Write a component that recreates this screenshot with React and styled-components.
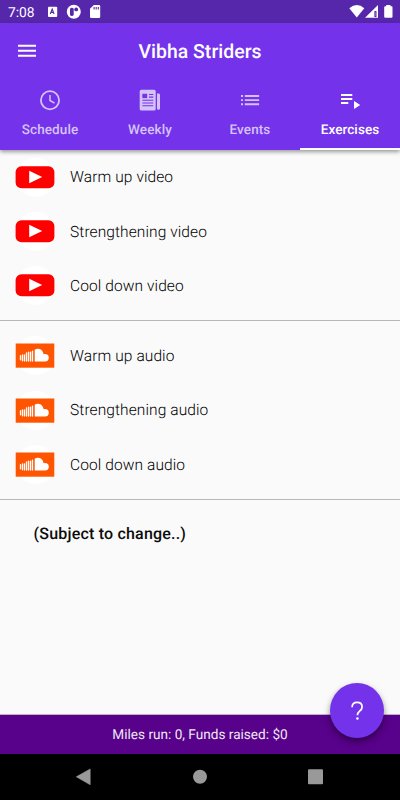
import React from "react";
import styled, { createGlobalStyle } from "styled-components";

const GlobalStyle = createGlobalStyle`
  * { box-sizing: border-box; }
  body {
    margin: 0;
    font-family: Roboto, "Liberation Sans", sans-serif;
    text-rendering: geometricPrecision;
  }
  svg { display: block; }
`;

const Screen = styled.div`
  width: 400px;
  height: 800px;
  display: flex;
  flex-direction: column;
  overflow: hidden;
  background: #fafafa;
`;

const StatusBar = styled.header`
  flex: 0 0 23px;
  min-height: 0;
  height: 23px;
  display: flex;
  justify-content: space-between;
  background: #5627ab;
  color: #fff;
`;

const Clock = styled.span`
  padding: 3px 0 0 8px;
  width: 47px;
  font-size: 13.8px;
  font-weight: 400;
  letter-spacing: 0;
  line-height: 20px;
`;

const StatusGroup = styled.div`
  display: flex;
`;

const Header = styled.div`
  flex: 0 0 127px;
  background: #7433ea;
  box-shadow: 0 2px 4px rgba(0, 0, 0, 0.38);
  z-index: 1;
`;

const Toolbar = styled.div`
  height: 56px;
  display: grid;
  grid-template-columns: 56px 1fr 56px;
  align-items: center;
`;

const MenuButton = styled.button`
  border: 0;
  background: none;
  padding: 0 0 0 18px;
  height: 56px;
`;

const Title = styled.h1`
  margin: 0;
  padding-top: 2px;
  color: #fff;
  text-align: center;
  font-size: 19.4px;
  line-height: 24px;
  font-weight: 500;
  letter-spacing: 0.05px;
`;

const Tabs = styled.nav`
  display: grid;
  grid-template-columns: repeat(4, 1fr);
  height: 71px;
`;

const Tab = styled.button`
  display: flex;
  flex-direction: column;
  align-items: center;
  padding: 9px 0 0;
  border: 0;
  border-bottom: 2px solid ${(p) => (p.$active ? "#fff" : "transparent")};
  background: none;
  font-family: inherit;
  font-size: 13.5px;
  font-weight: 500;
  line-height: 16px;
  letter-spacing: 0.1px;
  text-rendering: inherit;
  color: ${(p) => (p.$active ? "#fff" : "#d5c2f9")};
`;

const TabIcon = styled.span`
  height: 34px;
`;

const Content = styled.main`
  flex: 1;
`;

const Row = styled.div`
  height: 54.4px;
  display: flex;
  align-items: center;
  padding-left: 16px;
  gap: 15px;
`;

const Avatar = styled.span`
  width: 39px;
  height: 39px;
  border-radius: 50%;
  background: #fff;
`;

const RowLabel = styled.span`
  color: #000;
  font-size: 15.5px;
  line-height: 22px;
  font-weight: 350;
  letter-spacing: 0.1px;
`;

const Divider = styled.hr`
  margin: 7.3px 0;
  border: 0;
  height: 1px;
  background: #b7b7b7;
`;

const Note = styled.p`
  margin: 22.5px 0 0 33.5px;
  color: #0c0c0c;
  font-size: 16px;
  line-height: 22px;
  font-weight: 500;
  letter-spacing: 0.2px;
`;

const Footer = styled.footer`
  position: relative;
  flex: 0 0 39px;
  display: flex;
  align-items: center;
  justify-content: center;
  background: #58018a;
  color: #f0e8f5;
  font-size: 13.6px;
  box-shadow: 0 -1px 0 #b9b3c2;
`;

const HelpButton = styled.button`
  position: absolute;
  right: 16px;
  top: -32px;
  width: 54px;
  height: 55px;
  border: 0;
  border-radius: 50%;
  background: #7433ea;
  display: grid;
  place-items: center;
  padding: 0;
  box-shadow: 0 3px 5px rgba(0, 0, 0, 0.3), 0 4px 9px rgba(0, 0, 0, 0.18);
`;

const SystemNav = styled.nav`
  flex: 0 0 46px;
  background: #000;
`;

const NotificationIcons = () => (
  <svg width="58" height="23" viewBox="47 0 58 23" fill="#fff">
    <rect x="48" y="6.7" width="9.2" height="10.3" rx="1" />
    <path d="M50.3 14 52.2 9l1.9 5M51 12.4h2.5" fill="none" stroke="#5627ab" strokeWidth="1.1" />
    <circle cx="73.8" cy="11.8" r="7" />
    <rect x="70" y="7.7" width="3.7" height="8.2" rx="1.6" fill="#5627ab" />
    <circle cx="76.2" cy="9.4" r="1.9" fill="#5627ab" />
    <path d="M93.8 5H99q1.2 0 1.2 1.2v10.6q0 1.2-1.2 1.2h-7.8q-1.2 0-1.2-1.2V8.8z" />
    <path d="M94.1 7v2.5M96.2 7v2.5M98.3 7v2.5" stroke="#5627ab" strokeWidth="1.1" />
  </svg>
);

const SystemIcons = () => (
  <svg width="52" height="23" viewBox="348 0 52 23" fill="#fff">
    <path d="M349.3 8.2q7.7-6.3 15 0L356.8 17.6z" />
    <path d="M365 17.7 378 5v12.7z" />
    <path d="M374.4 11h2.1v6h-2.1z" fill="#5627ab" />
    <path d="M374.7 12h1v4h-1z" fill="#8f70c8" />
    <path d="M386.2 5h4.3v1.3h1q1 0 1 1v9.5q0 1-1 1h-6.3q-1 0-1-1V7.3q0-1 1-1h1z" />
  </svg>
);

const MenuIcon = () => (
  <svg width="18" height="14" viewBox="0 0 18 14" stroke="#fff" strokeWidth="2">
    <path d="M0 1.7h18M0 6.7h18M0 11.7h18" />
  </svg>
);

const ClockIcon = () => (
  <svg width="24" height="24" viewBox="0 0 24 24" fill="none" stroke="currentColor" strokeWidth="1.8">
    <circle cx="12" cy="12.2" r="9.1" />
    <path d="M12 7v5.5l4.5 2.7" strokeWidth="1.5" />
  </svg>
);

const NewsIcon = () => (
  <svg width="24" height="24" viewBox="0 0 24 24">
    <rect x="1.7" y="1.8" width="16" height="20.7" rx="1.6" fill="currentColor" />
    <path d="M19 5.5h1.6q1.4 0 1.4 1.4v13.3q0 1.6-1.5 1.6T19 20.2z" fill="currentColor" />
    <g fill="none" stroke="#7433ea" strokeWidth="1.1">
      <path d="M4.4 12.3h10.9M4.4 15h10.9M4.4 17.8h10.9M11 6.5h4.3M11 9.1h4.3" />
      <rect x="4.9" y="6.3" width="3.7" height="3.3" fill="#7433ea" />
    </g>
  </svg>
);

const ListIcon = () => (
  <svg width="24" height="24" viewBox="0 0 24 24" stroke="currentColor" strokeWidth="1.9">
    <path d="M3 8h2M3 12.1h2M3 16.2h2M6.8 8H21.1M6.8 12.1H21.1M6.8 16.2H21.1" />
  </svg>
);

const PlaylistIcon = () => (
  <svg width="24" height="24" viewBox="0 0 24 24" stroke="currentColor" strokeWidth="2">
    <path d="M3 7h11.3M3 11h11.3M3 15h7.3" />
    <path d="M16 13v8l6.2-4z" fill="currentColor" stroke="none" />
  </svg>
);

const VideoIcon = () => (
  <svg width="39" height="39" viewBox="0 0 39 39" overflow="visible">
    <rect x="-0.4" y="8.3" width="38.8" height="22" rx="5.8" fill="#f00" />
    <path d="M13.2 12.8v12.5l13-6.2z" fill="#fff" />
  </svg>
);

const AudioIcon = () => (
  <svg width="39" height="39" viewBox="0 0 39 39" overflow="visible">
    <rect x="-0.3" y="7.5" width="38.6" height="24.2" fill="#ff5500" />
    <path d="M18.7 13.8q1.8-1.3 3.7-1 4.1.4 5.3 5.4 5.1-.6 5.1 3.5 0 3.7-3.8 3.7H18.7z" fill="#fff" />
    <path
      d="M4.5 19.7v4M6.5 18.8v6M8.5 18.8v6.1M10.5 17V25M12.5 16.1V25M14.5 16.2V25M16.5 15.2V25"
      stroke="#fff"
      strokeWidth="1.35"
      strokeLinecap="round"
    />
  </svg>
);

const HelpIcon = () => (
  <svg width="16" height="22" viewBox="0 0 16 22" fill="none" stroke="#fff" strokeWidth="1.7">
    <path d="M3.1 7.3C3.1 4.1 5 2.4 8.1 2.4s5 1.7 5 4.5c0 2.1-1.1 3.1-2.5 4.3-1.7 1.5-2.2 2.1-2.2 4" />
    <circle cx="8.4" cy="18.4" r="1.25" fill="#fff" stroke="none" />
  </svg>
);

const NavIcons = () => (
  <svg width="400" height="46" viewBox="0 0 400 46" fill="#999">
    <path d="M76.3 22.8 90.2 15v15.7z" stroke="#999" strokeWidth=".6" strokeLinejoin="round" />
    <circle cx="200" cy="22.8" r="7" />
    <rect x="308" y="15.2" width="15" height="15" rx="1" />
  </svg>
);

const tabs = [
  { label: "Schedule", Icon: ClockIcon },
  { label: "Weekly", Icon: NewsIcon },
  { label: "Events", Icon: ListIcon },
  { label: "Exercises", Icon: PlaylistIcon, active: true },
];

const groups = [
  { Icon: VideoIcon, items: ["Warm up video", "Strengthening video", "Cool down video"] },
  { Icon: AudioIcon, items: ["Warm up audio", "Strengthening audio", "Cool down audio"] },
];

export default function App() {
  return (
    <Screen>
      <GlobalStyle />
      <StatusBar>
        <StatusGroup>
          <Clock>7:08</Clock>
          <NotificationIcons />
        </StatusGroup>
        <SystemIcons />
      </StatusBar>
      <Header>
        <Toolbar>
          <MenuButton aria-label="Menu"><MenuIcon /></MenuButton>
          <Title>Vibha Striders</Title>
        </Toolbar>
        <Tabs>
          {tabs.map(({ label, Icon, active }) => (
            <Tab key={label} $active={active}>
              <TabIcon><Icon /></TabIcon>
              {label}
            </Tab>
          ))}
        </Tabs>
      </Header>
      <Content>
        {groups.map(({ Icon, items }) => (
          <React.Fragment key={items[0]}>
            {items.map((item) => (
              <Row key={item}>
                <Avatar><Icon /></Avatar>
                <RowLabel>{item}</RowLabel>
              </Row>
            ))}
            <Divider />
          </React.Fragment>
        ))}
        <Note>(Subject to change..)</Note>
      </Content>
      <Footer>
        Miles run: 0, Funds raised: $0
        <HelpButton aria-label="Help"><HelpIcon /></HelpButton>
      </Footer>
      <SystemNav><NavIcons /></SystemNav>
    </Screen>
  );
}
